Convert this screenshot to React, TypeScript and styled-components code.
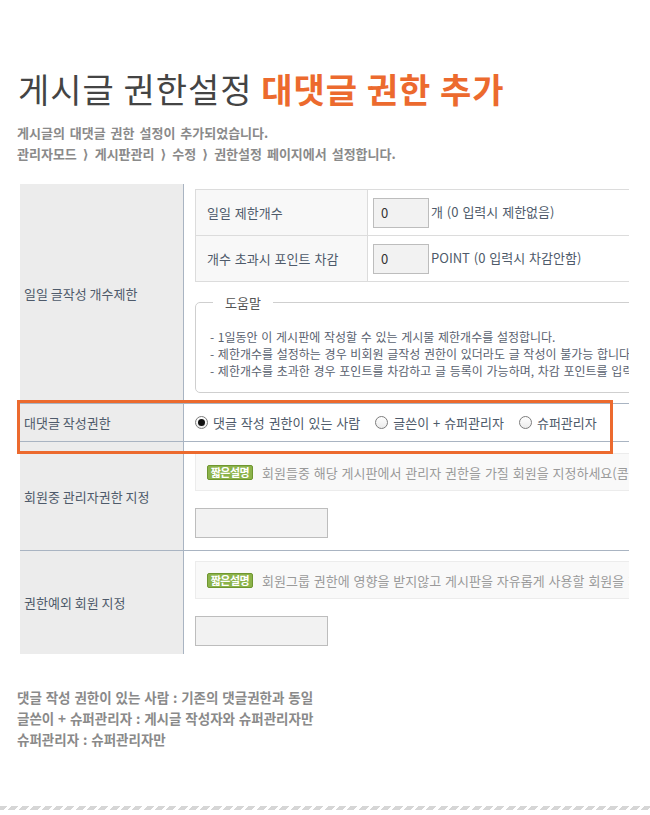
import React from "react";
import styled, { createGlobalStyle } from "styled-components";

const colors = {
  orange: "#ec6a2e",
  title: "#444444",
  note: "#8a8a8a",
  label: "#4e5a6a",
  rule: "#a9b4c2",
  labelBg: "#ececec",
  cellLine: "#dcdcdc",
  cellHead: "#f8f8f8",
  inputBg: "#f2f2f2",
  inputLine: "#bdbdbd",
  descText: "#9a9a9a",
};

const GlobalStyle = createGlobalStyle`
  html, body {
    margin: 0;
    padding: 0;
    background: #fff;
  }
  body {
    font-family: "Noto Sans CJK KR", "Noto Sans", sans-serif;
  }
`;

const Page = styled.div`
  width: 650px;
  min-height: 815px;
  overflow: hidden;
`;

const Title = styled.h1`
  margin: 69px 0 0 18px;
  font-size: 34px;
  line-height: 40px;
  font-weight: 400;
  letter-spacing: 1px;
  color: ${colors.title};
  white-space: nowrap;
`;

const Accent = styled.strong`
  color: ${colors.orange};
  font-weight: 700;
`;

const Intro = styled.p`
  margin: 13px 0 0 17px;
  font-size: 13px;
  line-height: 21px;
  font-weight: 700;
  word-spacing: 2px;
  color: ${colors.note};
  white-space: nowrap;
`;

/* narrow angle bracket between path steps */
const Sep = styled.span`
  margin: 0 1px;
  font-family: "DejaVu Sans", sans-serif;
  font-weight: 700;
  line-height: 1;
`;

const Board = styled.div`
  position: relative;
  margin: 20px 0 0 20px;
  width: 609px;
`;

const Clip = styled.div`
  overflow: hidden;
`;

const Grid = styled.div`
  width: 720px;
`;

const Row = styled.div<{ $first?: boolean }>`
  display: flex;
  border-top: ${(p) => (p.$first ? "none" : `1px solid ${colors.rule}`)};
`;

const Label = styled.div`
  box-sizing: border-box;
  width: 164px;
  flex: none;
  padding-left: 4px;
  background: ${colors.labelBg};
  border-right: 1px solid ${colors.rule};
  display: flex;
  align-items: center;
  font-size: 13px;
  color: ${colors.label};
  white-space: nowrap;
`;

const Cell = styled.div<{ $pad: string }>`
  flex: 1;
  min-width: 0;
  padding: ${(p) => p.$pad};
  font-size: 13px;
  color: ${colors.label};
  word-spacing: 1px;
  white-space: nowrap;
`;

const LimitTable = styled.table`
  border-collapse: collapse;
  width: 540px;
`;

const LimitHead = styled.th`
  box-sizing: border-box;
  width: 172px;
  height: 45px;
  padding: 0 0 0 11px;
  border: 1px solid ${colors.cellLine};
  background: ${colors.cellHead};
  text-align: left;
  font-weight: 400;
  font-size: 13px;
  color: ${colors.label};
`;

const LimitValue = styled.td`
  height: 45px;
  padding: 0 0 0 5px;
  border: 1px solid ${colors.cellLine};
  font-size: 13px;
  color: ${colors.label};
`;

const ValueInput = styled.input`
  box-sizing: border-box;
  width: 56px;
  height: 30px;
  margin: 0 2px 0 0;
  padding: 0 7px;
  border: 1px solid ${colors.inputLine};
  background: ${colors.inputBg};
  font-family: inherit;
  font-size: 13px;
  color: #333;
  vertical-align: middle;
`;

const Help = styled.fieldset`
  margin: 12px 0 0;
  padding: 17px 0 13px 14px;
  border: 1px solid #cfcfcf;
  border-radius: 5px;
  min-width: 0;
`;

const HelpLegend = styled.legend`
  margin-left: 3px;
  padding: 0 12px;
  font-size: 13px;
  line-height: 17px;
  color: #555;
`;

const HelpLine = styled.p`
  margin: 0;
  font-size: 12px;
  line-height: 17px;
  color: #5a6270;
`;

const RadioGroup = styled.div`
  display: flex;
  align-items: center;
  height: 37px;
`;

const Option = styled.label`
  display: flex;
  align-items: center;
  gap: 5px;
  margin-right: 15px;
  color: ${colors.label};
`;

const RadioMark = styled.span<{ $checked?: boolean }>`
  box-sizing: border-box;
  position: relative;
  width: 13px;
  height: 13px;
  border: 1px solid #7c7c7c;
  border-radius: 50%;
  background: linear-gradient(#ffffff, #ebebeb);

  &::after {
    content: "";
    display: ${(p) => (p.$checked ? "block" : "none")};
    position: absolute;
    left: 2px;
    top: 2px;
    width: 7px;
    height: 7px;
    border-radius: 50%;
    background: #111;
  }
`;

const Desc = styled.div`
  box-sizing: border-box;
  display: flex;
  align-items: center;
  height: 38px;
  width: 540px;
  padding-left: 11px;
  border: 1px solid #ececec;
  background: #f9f9f9;
`;

const Badge = styled.span`
  box-sizing: border-box;
  flex: none;
  width: 46px;
  height: 15px;
  margin-right: 9px;
  border: 1px solid #6f9631;
  border-radius: 2px;
  background: #8cb34a;
  color: #fff;
  font-size: 11px;
  font-weight: 700;
  line-height: 13px;
  text-align: center;
  letter-spacing: -0.5px;
  word-spacing: 0;
`;

const DescText = styled.span`
  color: ${colors.descText};
`;

const MemberInput = styled.input`
  display: block;
  box-sizing: border-box;
  width: 133px;
  height: 30px;
  margin: 17px 0 0;
  border: 1px solid ${colors.inputLine};
  background: ${colors.inputBg};
`;

const Highlight = styled.div`
  position: absolute;
  left: -3px;
  top: 216px;
  box-sizing: border-box;
  width: 596px;
  height: 54px;
  border: 3px solid ${colors.orange};
  pointer-events: none;
`;

const Notes = styled.p`
  margin: 33px 0 0 17px;
  font-size: 13.5px;
  line-height: 21px;
  font-weight: 700;
  word-spacing: 0.8px;
  color: ${colors.note};
  white-space: nowrap;
`;

const Stripe = styled.div`
  height: 4px;
  margin-top: 56px;
  background: repeating-linear-gradient(
    135deg,
    #d6d6d6 0 5px,
    #ffffff 5px 8px
  );
`;

const limits = [
  { head: "일일 제한개수", unit: "개 (0 입력시 제한없음)" },
  { head: "개수 초과시 포인트 차감", unit: "POINT (0 입력시 차감안함)" },
];

const helpLines = [
  "- 1일동안 이 게시판에 작성할 수 있는 게시물 제한개수를 설정합니다.",
  "- 제한개수를 설정하는 경우 비회원 글작성 권한이 있더라도 글 작성이 불가능 합니다.",
  "- 제한개수를 초과한 경우 포인트를 차감하고 글 등록이 가능하며, 차감 포인트를 입력하지 않으면 등록이 제한됩니다.",
];

const options = [
  { text: "댓글 작성 권한이 있는 사람", checked: true },
  { text: "글쓴이 + 슈퍼관리자", checked: false },
  { text: "슈퍼관리자", checked: false },
];

const path = ["관리자모드", "게시판관리", "수정"];

export default function App() {
  return (
    <Page>
      <GlobalStyle />
      <Title>
        게시글 권한설정 <Accent>대댓글 권한 추가</Accent>
      </Title>
      <Intro>
        게시글의 대댓글 권한 설정이 추가되었습니다.
        <br />
        {path.map((p) => (
          <React.Fragment key={p}>
            {p} <Sep>⟩</Sep>{" "}
          </React.Fragment>
        ))}
        권한설정 페이지에서 설정합니다.
      </Intro>

      <Board>
        <Clip>
          <Grid>
            <Row $first>
              <Label>일일 글작성 개수제한</Label>
              <Cell $pad="5px 0 10px 11px">
                <LimitTable>
                  <tbody>
                    {limits.map((l) => (
                      <tr key={l.head}>
                        <LimitHead>{l.head}</LimitHead>
                        <LimitValue>
                          <ValueInput defaultValue="0" readOnly />
                          {l.unit}
                        </LimitValue>
                      </tr>
                    ))}
                  </tbody>
                </LimitTable>
                <Help>
                  <HelpLegend>도움말</HelpLegend>
                  {helpLines.map((t) => (
                    <HelpLine key={t}>{t}</HelpLine>
                  ))}
                </Help>
              </Cell>
            </Row>

            <Row>
              <Label>대댓글 작성권한</Label>
              <Cell $pad="0 0 0 11px">
                <RadioGroup>
                  {options.map((o) => (
                    <Option key={o.text}>
                      <RadioMark $checked={o.checked} />
                      {o.text}
                    </Option>
                  ))}
                </RadioGroup>
              </Cell>
            </Row>

            <Row>
              <Label>회원중 관리자권한 지정</Label>
              <Cell $pad="11px 0 12px 11px">
                <Desc>
                  <Badge>짧은설명</Badge>
                  <DescText>
                    회원들중 해당 게시판에서 관리자 권한을 가질 회원을 지정하세요(콤마로 구분)
                  </DescText>
                </Desc>
                <MemberInput readOnly />
              </Cell>
            </Row>

            <Row>
              <Label>권한예외 회원 지정</Label>
              <Cell $pad="10px 0 8px 11px">
                <Desc>
                  <Badge>짧은설명</Badge>
                  <DescText>
                    회원그룹 권한에 영향을 받지않고 게시판을 자유롭게 사용할 회원을 지정합니다.
                  </DescText>
                </Desc>
                <MemberInput readOnly />
              </Cell>
            </Row>
          </Grid>
        </Clip>
        <Highlight />
      </Board>

      <Notes>
        댓글 작성 권한이 있는 사람 : 기존의 댓글권한과 동일
        <br />
        글쓴이 + 슈퍼관리자 : 게시글 작성자와 슈퍼관리자만
        <br />
        슈퍼관리자 : 슈퍼관리자만
      </Notes>
      <Stripe />
    </Page>
  );
}
